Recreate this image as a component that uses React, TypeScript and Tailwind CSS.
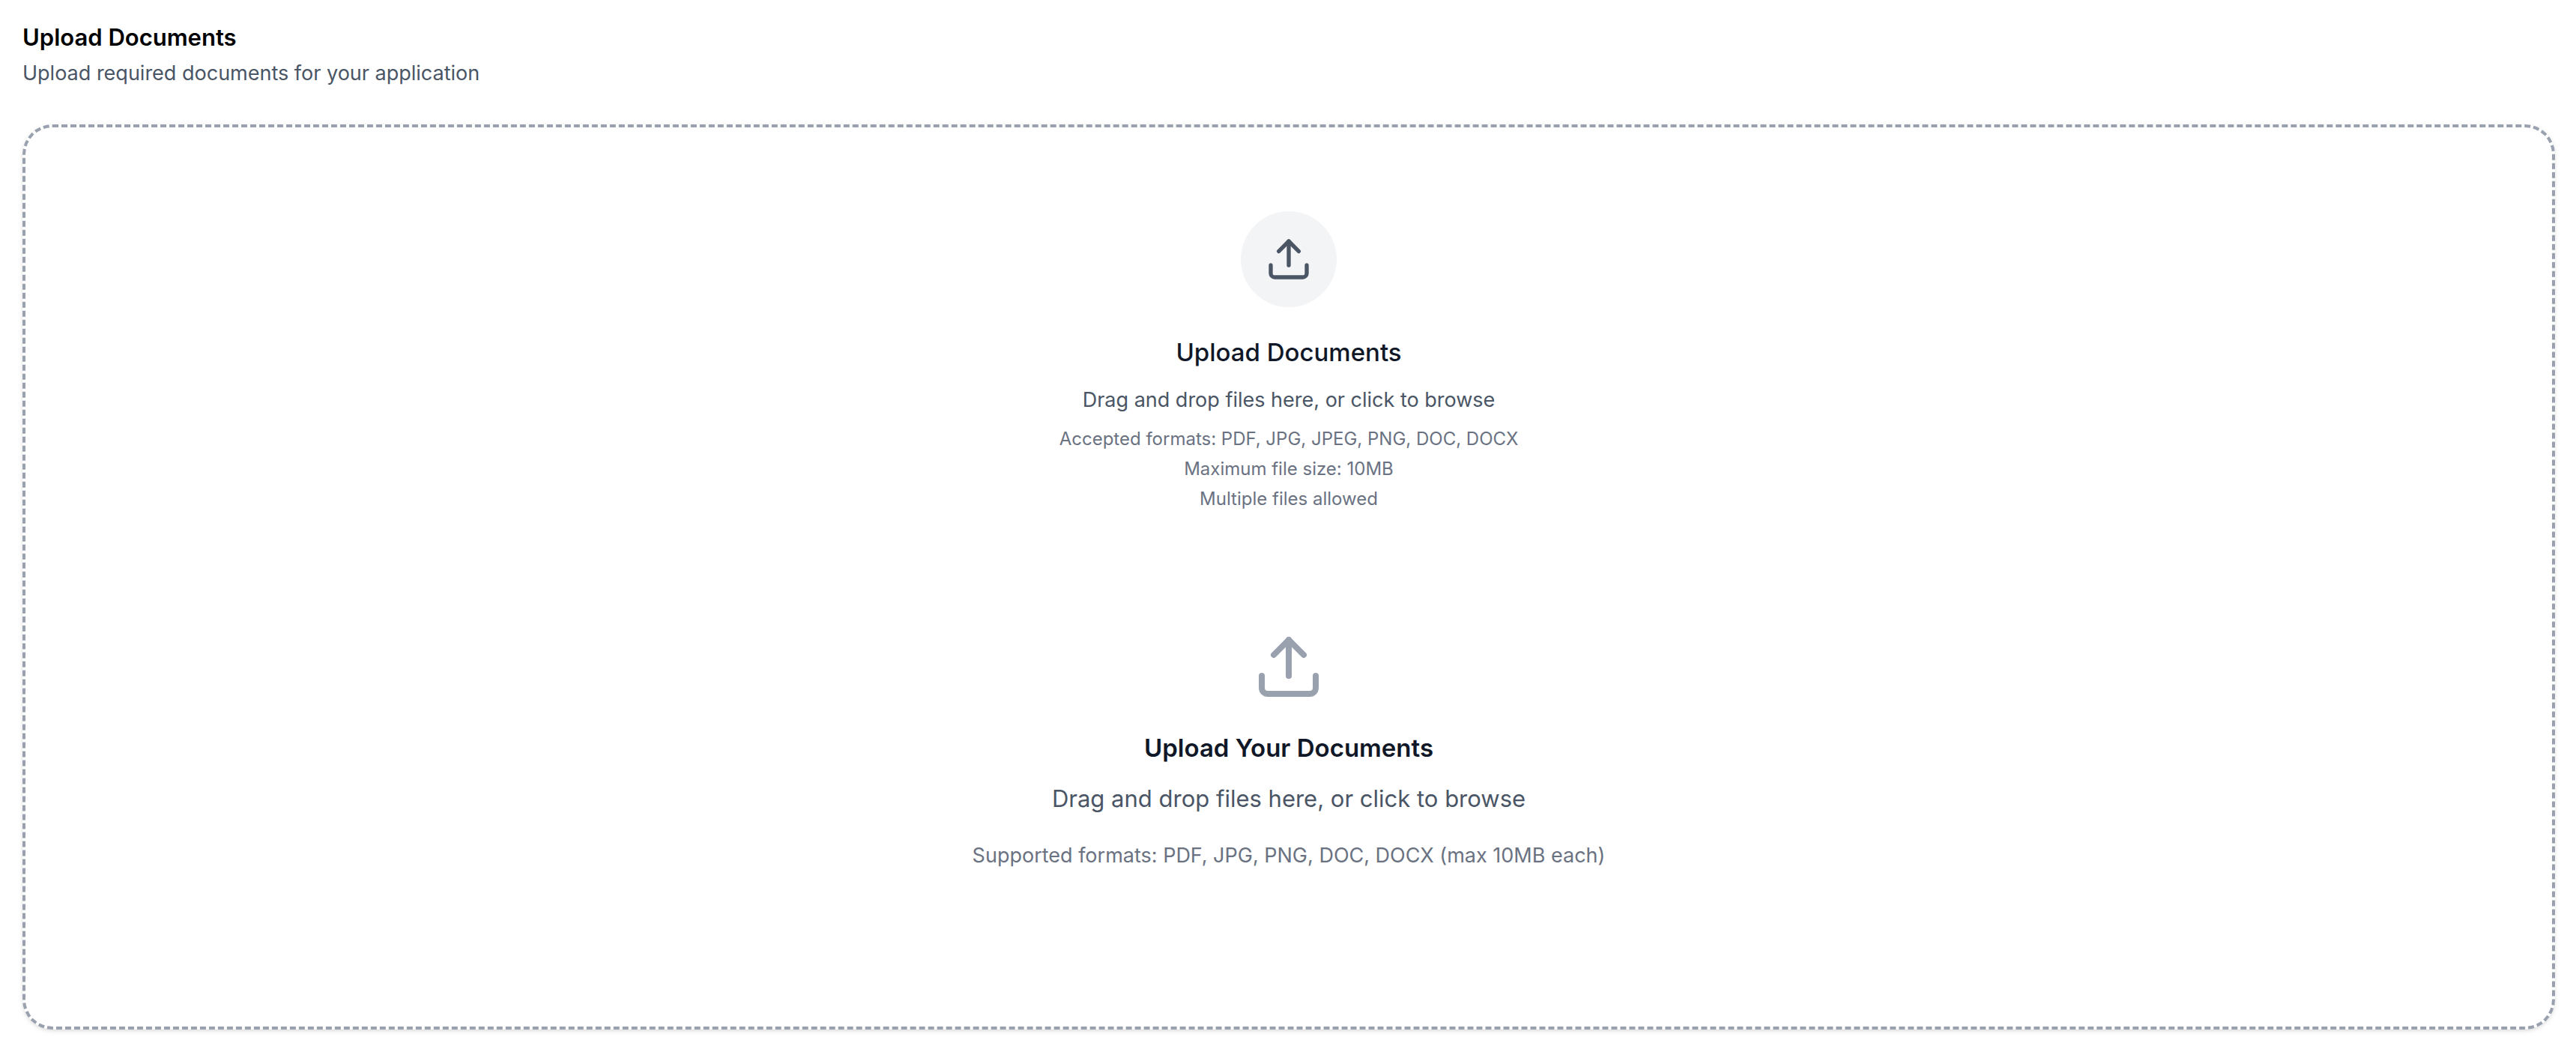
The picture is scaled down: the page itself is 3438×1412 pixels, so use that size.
import { Upload } from "lucide-react";

export default function App() {
  return (
    <main className="bg-white pt-[26px] pr-7 pb-[38px] pl-[30px] font-['Inter',sans-serif]">
      <header className="mb-12">
        <h1 className="text-[31px] leading-[48px] font-semibold text-black">Upload Documents</h1>
        <p className="mt-1 text-[27px] leading-10 text-gray-600">Upload required documents for your application</p>
      </header>
      <button
        type="button"
        className="block w-full rounded-[40px] border-4 border-dashed border-gray-400 bg-white px-16 pt-28 pb-52 text-center shadow-[0_2px_6px_rgba(0,0,0,0.1),0_2px_4px_-2px_rgba(0,0,0,0.1)]"
      >
        <span className="mx-auto flex size-32 items-center justify-center rounded-full bg-gray-100">
          <Upload className="size-16 text-gray-600" />
        </span>
        <span className="mt-8 block text-[33px] leading-[56px] font-medium text-gray-900">Upload Documents</span>
        <span className="mt-4 block text-[27px] leading-10 text-gray-600">Drag and drop files here, or click to browse</span>
        <span className="mt-3 block text-2xl leading-10 text-gray-500">
          <span className="block">Accepted formats: PDF, JPG, JPEG, PNG, DOC, DOCX</span>
          <span className="block">Maximum file size: 10MB</span>
          <span className="block">Multiple files allowed</span>
        </span>
        <Upload className="mx-auto mt-39 size-24 text-gray-400" />
        <span className="mt-8 block text-[33px] leading-[56px] font-semibold text-gray-900">Upload Your Documents</span>
        <span className="mt-4 block text-[31px] leading-[48px] text-gray-600">Drag and drop files here, or click to browse</span>
        <span className="mt-8 block text-[27px] leading-10 text-gray-500">Supported formats: PDF, JPG, PNG, DOC, DOCX (max 10MB each)</span>
      </button>
    </main>
  );
}
